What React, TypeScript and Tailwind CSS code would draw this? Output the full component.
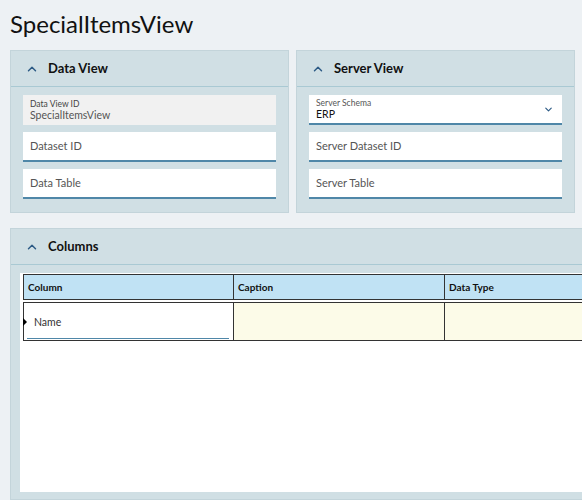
import { ChevronUp, ChevronDown } from 'lucide-react';

const font = { fontFamily: 'Lato, "Open Sans", sans-serif' };

function PanelHeader({ title }: { title: string }) {
  return (
    <div className="flex items-center h-[36px] border-b border-[#a9c9d3] pl-[14px]">
      <ChevronUp size={14} strokeWidth={2.5} className="text-[#2c5a85]" />
      <span className="ml-[9px] text-[13px] font-bold text-[#111]">{title}</span>
    </div>
  );
}

function InputField({ placeholder }: { placeholder: string }) {
  return (
    <div className="h-[30px] bg-white border-b-2 border-[#4f87a8] flex items-center pl-[7px] text-[11px] text-[#555]">
      {placeholder}
    </div>
  );
}

export default function App() {
  return (
    <div className="w-[582px] h-[500px] overflow-hidden bg-[#edf1f4] text-[#222]" style={font}>
      <div className="h-[50px] flex items-center pl-[10px] pb-[2px] text-[24px] leading-none text-[#111]">SpecialItemsView</div>

      <div className="flex gap-[7px] pl-[10px]">
        {/* Data View */}
        <div className="w-[279px] shrink-0 h-[163px] bg-[#d0dfe4] border border-[#c3d4da]">
          <PanelHeader title="Data View" />
          <div className="flex flex-col gap-[7px] px-[12px] pt-[8px]">
            <div className="h-[30px] bg-[#f1f1f1] flex flex-col justify-center pl-[7px]">
              <span className="text-[8.5px] leading-[10px] text-[#444]">Data View ID</span>
              <span className="text-[10.5px] leading-[13px] text-[#555]">SpecialItemsView</span>
            </div>
            <InputField placeholder="Dataset ID" />
            <InputField placeholder="Data Table" />
          </div>
        </div>

        {/* Server View */}
        <div className="w-[279px] shrink-0 h-[163px] bg-[#d0dfe4] border border-[#c3d4da]">
          <PanelHeader title="Server View" />
          <div className="flex flex-col gap-[7px] px-[12px] pt-[8px]">
            <div className="h-[30px] bg-white border-b-2 border-[#4f87a8] flex items-center justify-between pl-[7px] pr-[8px]">
              <div className="flex flex-col">
                <span className="text-[8.5px] leading-[10px] text-[#555]">Server Schema</span>
                <span className="text-[10.5px] leading-[12px] text-[#111]">ERP</span>
              </div>
              <ChevronDown size={11} strokeWidth={2.5} className="text-[#2c5a85]" />
            </div>
            <InputField placeholder="Server Dataset ID" />
            <InputField placeholder="Server Table" />
          </div>
        </div>

        <div className="w-[20px] shrink-0 h-[163px] bg-[#d0dfe4] border border-[#c3d4da]" />
      </div>

      {/* Columns */}
      <div className="mt-[15px] ml-[10px] h-[272px] bg-[#d0dfe4] border border-[#c3d4da] border-r-0">
        <PanelHeader title="Columns" />
        <div className="ml-[9px] mt-[8px] h-[219px] bg-white">
          <div className="pl-[3px] pt-[1px]">
            <div className="grid grid-cols-[211px_211px_200px] bg-white">
              {['Column', 'Caption', 'Data Type'].map((h, i) => (
                <div
                  key={h}
                  className={`h-[26px] bg-[#c0e2f4] border-y border-[#333] ${i === 0 ? 'border-l' : ''} border-r flex items-center pl-[4px] text-[10px] font-bold text-[#111]`}
                >
                  {h}
                </div>
              ))}
            </div>
            <div className="grid grid-cols-[211px_211px_200px] mt-[2px]">
              <div className="relative h-[39px] bg-white border-y border-l border-r border-[#333] pl-[3px] pr-[4px]">
                <span className="absolute left-[-1px] top-[15px] w-0 h-0 border-y-[4px] border-y-transparent border-l-[4px] border-l-black" />
                <div className="mt-[12px] ml-[7px] text-[10.5px] text-[#333]">Name</div>
                <div className="mt-[7px] h-[1px] bg-[#4f87a8]" />
              </div>
              <div className="h-[39px] bg-[#fcfbe8] border-y border-r border-[#333]" />
              <div className="h-[39px] bg-[#fcfbe8] border-y border-r border-[#333]" />
            </div>
          </div>
        </div>
      </div>
    </div>
  );
}
